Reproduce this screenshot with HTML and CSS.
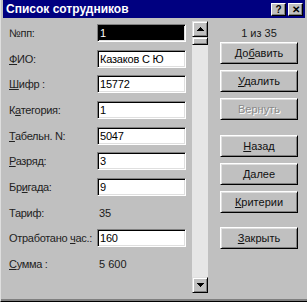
FILE: index.html
```html
<!DOCTYPE html>
<html>
<head>
	<title>Список сотрудников</title>
	<meta charset="utf-8">
	<link rel="stylesheet" href="styles.css">
</head>
<body>

	<div class="window">

		<div class="caption">
			<span class="caption-text">Список сотрудников</span>
			<span class="caption-btns">
				<span class="cbtn">?</span>
				<span class="cbtn">&#x2715;</span>
			</span>
		</div>

		<div class="client">

			<div class="form">
				<div class="row"><span class="lbl">№пп:</span><span class="field sel">1</span></div>
				<div class="row"><span class="lbl"><u>Ф</u>ИО:</span><span class="field">Казаков С Ю</span></div>
				<div class="row"><span class="lbl"><u>Ш</u>ифр :</span><span class="field">15772</span></div>
				<div class="row"><span class="lbl">К<u>а</u>тегория:</span><span class="field">1</span></div>
				<div class="row"><span class="lbl"><u>Т</u>абельн. N:</span><span class="field">5047</span></div>
				<div class="row"><span class="lbl"><u>Р</u>азряд:</span><span class="field">3</span></div>
				<div class="row"><span class="lbl">Бр<u>и</u>гада:</span><span class="field">9</span></div>
				<div class="row"><span class="lbl">Тариф:</span><span class="value">35</span></div>
				<div class="row"><span class="lbl">Отработано <u>ч</u>ас.:</span><span class="field">160</span></div>
				<div class="row"><span class="lbl"><u>С</u>умма :</span><span class="value">5 600</span></div>
			</div>

			<div class="scroll">
				<div class="sbtn">
					<svg width="7" height="4" viewBox="0 0 7 4"><path d="M3 0h1v1h1v1h1v1h1v1H0V3h1V2h1V1h1z" fill="#000"/></svg>
				</div>
				<div class="thumb"></div>
				<div class="track"></div>
				<div class="sbtn">
					<svg width="7" height="4" viewBox="0 0 7 4"><path d="M0 0h7v1H6v1H5v1H4v1H3V3H2V2H1V1H0z" fill="#000"/></svg>
				</div>
			</div>

			<div class="side">
				<div class="counter">1 из 35</div>
				<div class="btn b-first">До<u>б</u>авить</div>
				<div class="btn"><u>У</u>далить</div>
				<div class="btn off">Вернуть</div>
				<div class="btn b-gap"><u>Н</u>азад</div>
				<div class="btn"><u>Д</u>алее</div>
				<div class="btn"><u>К</u>ритерии</div>
				<div class="btn b-gap2"><u>З</u>акрыть</div>
			</div>

		</div>

	</div>

</body>
</html>
```

FILE: styles.css
```css
* {
	box-sizing: border-box;
}

body {
	margin: 0;
	font-family: "Liberation Sans", Arial, sans-serif;
	font-size: 11px;
	color: #1a1a1a;
	background: #c0c0c0;
}

.window {
	width: 307px;
	height: 302px;
	background: #c0c0c0;
	padding: 0 2px 3px 2px;
	border-left: 1px solid #dfdfdf;
	border-bottom: 1px solid #000;
	box-shadow: inset 0 -2px #808080;
}

/* title bar */

.caption {
	height: 18px;
	background: #000080;
	color: #fff;
	display: flex;
	align-items: center;
	justify-content: space-between;
	padding: 0 2px 0 3px;
}

.caption-text {
	font-weight: 700;
	font-size: 12px;
}

.caption-btns {
	display: flex;
	gap: 2px;
}

.cbtn {
	width: 15px;
	height: 13px;
	background: #c0c0c0;
	color: #000;
	font-size: 10px;
	font-weight: 700;
	line-height: 11px;
	text-align: center;
	border: 1px solid;
	border-color: #fff #000 #000 #fff;
	box-shadow: inset -1px -1px #808080;
}

/* client area */

.client {
	display: grid;
	grid-template-columns: 189px 16px 1fr;
	padding-top: 2px;
}

.form {
	display: grid;
	grid-auto-rows: 25.7px;
}

.row {
	display: flex;
	align-items: center;
	padding-left: 6px;
}

.lbl {
	width: 88px;
	color: #222;
	letter-spacing: -0.3px;
}

.field {
	width: 89px;
	height: 18px;
	background: #fff;
	color: #000;
	font-size: 11px;
	letter-spacing: -0.2px;
	line-height: 14px;
	padding: 1px 2px;
	border: 1px solid;
	border-color: #808080 #fff #fff #808080;
	box-shadow: inset 1px 1px #000, inset -1px -1px #dfdfdf;
}

.field.sel {
	background: #000;
	color: #fff;
}

.value {
	padding-left: 2px;
	font-size: 11px;
}

/* scrollbar */

.scroll {
	display: flex;
	flex-direction: column;
	margin-top: 1px;
	height: 272px;
}

.sbtn, .thumb {
	height: 16px;
	background: #c0c0c0;
	border: 1px solid;
	border-color: #dfdfdf #000 #000 #dfdfdf;
	box-shadow: inset 1px 1px #fff, inset -1px -1px #808080;
	display: flex;
	align-items: center;
	justify-content: center;
}

.thumb {
	height: 8px;
}

.track {
	flex: 1;
	background: #e6e6e6;
}

/* right side */

.side {
	display: flex;
	flex-direction: column;
	padding-left: 12px;
}

.counter {
	height: 22px;
	line-height: 20px;
	padding-top: 3px;
	text-align: center;
	width: 78px;
	font-size: 11px;
}

.btn {
	width: 78px;
	height: 22px;
	margin-top: 6px;
	text-align: center;
	line-height: 20px;
	color: #111;
	background: #c0c0c0;
	border: 1px solid;
	border-color: #fff #000 #000 #fff;
	box-shadow: inset 1px 1px #dfdfdf, inset -1px -1px #808080;
}

.b-first {
	margin-top: 0;
}

.b-gap {
	margin-top: 15px;
}

.b-gap2 {
	margin-top: 14px;
}

.btn.off {
	color: #8a8a8a;
	text-shadow: 1px 1px #fff;
}
```
